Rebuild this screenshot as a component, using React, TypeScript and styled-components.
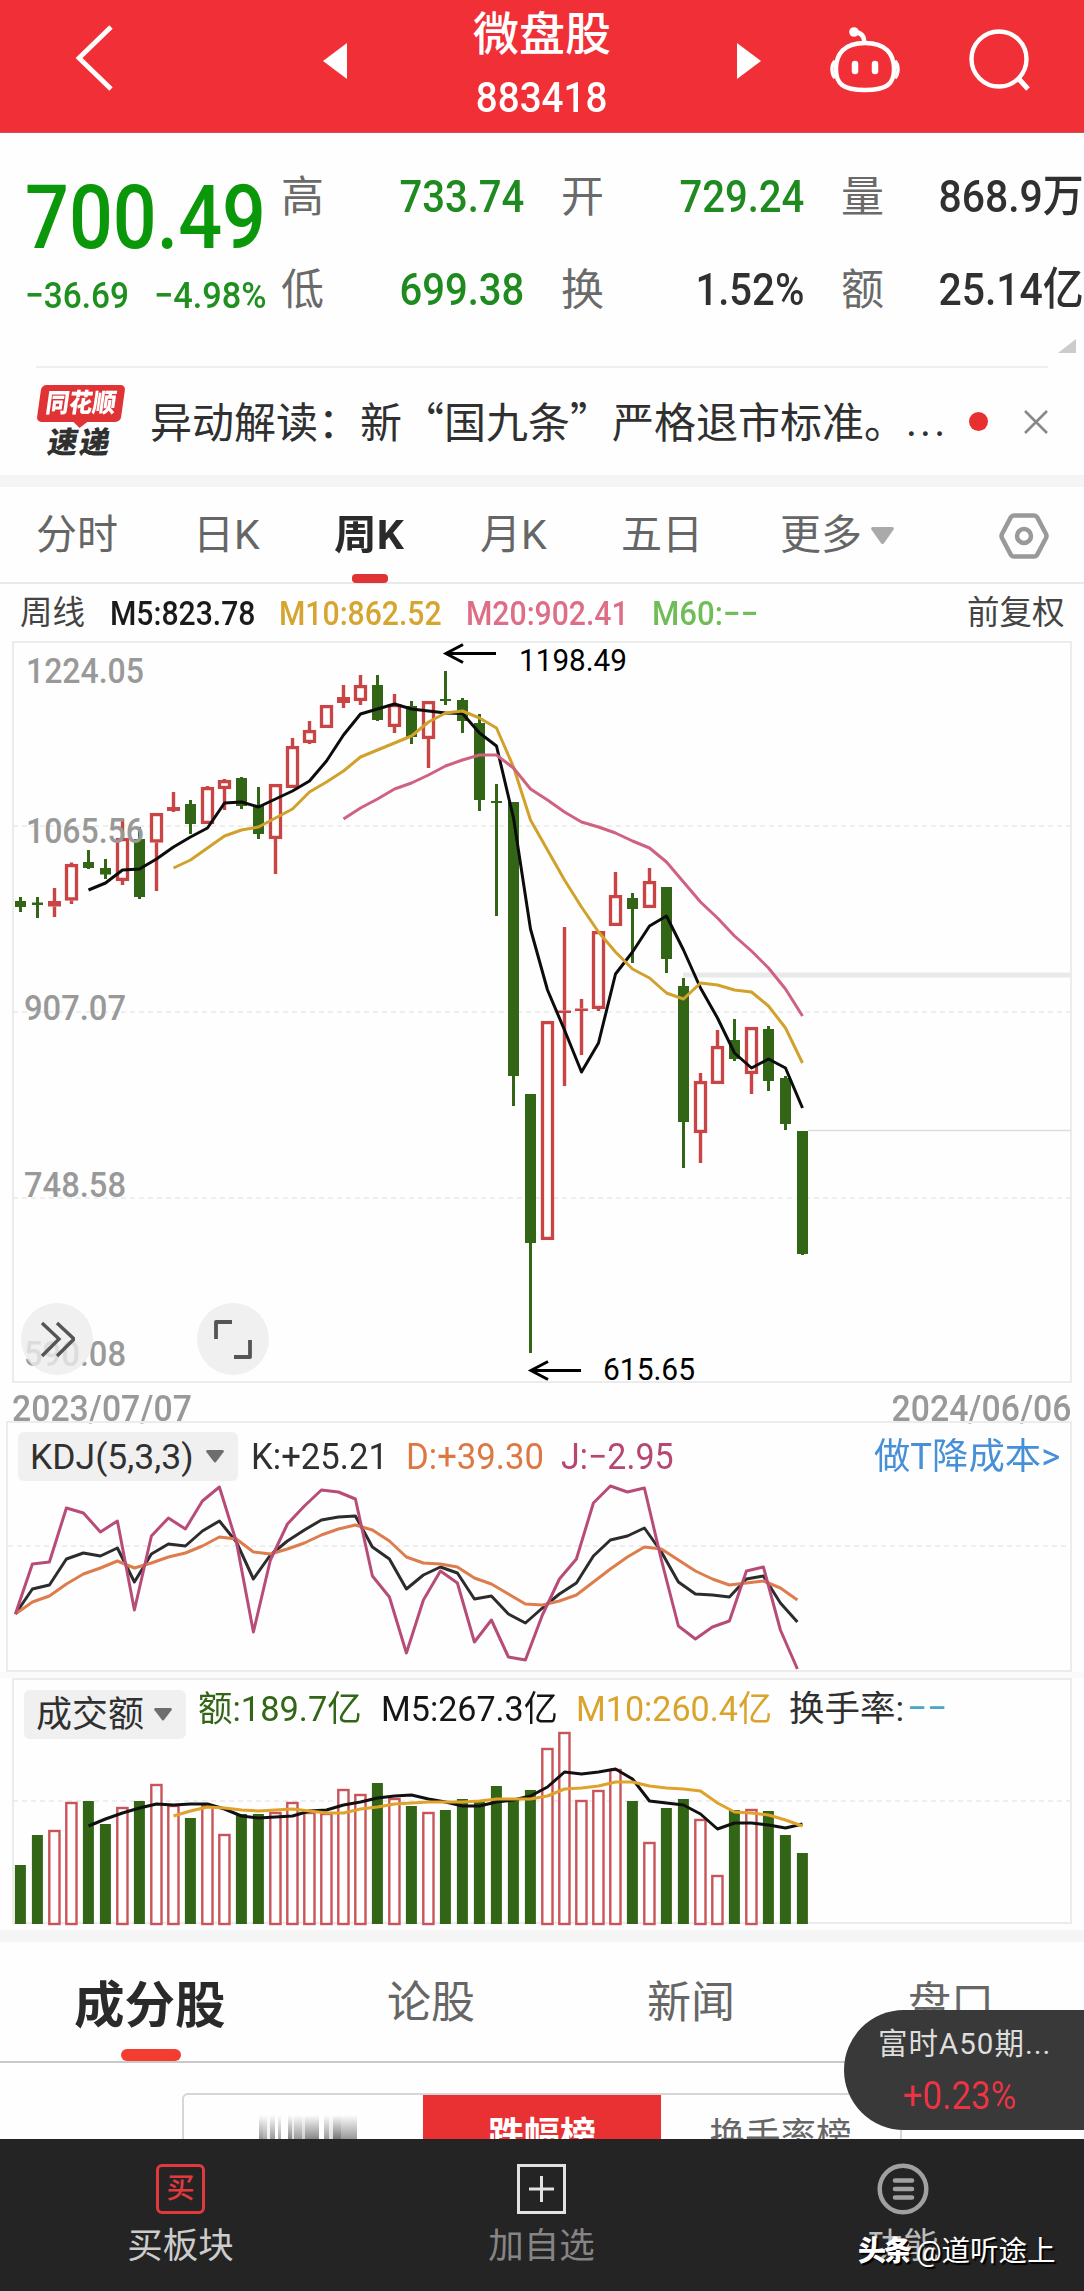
import React from "react";
import styled, { createGlobalStyle } from "styled-components";

const GREEN = "#326616";
const RED = "#c94444";
const GOLD = "#d0a22c";
const ROSE = "#cf6280";

const Global = createGlobalStyle`
  * { box-sizing: border-box; }
  body {
    margin: 0;
    background: #fefefe;
    font-family: Roboto, "Noto Sans CJK SC", sans-serif;
    color: #303030;
  }
  svg { display: block; flex: none; }
`;

const Page = styled.main`
  width: 1084px;
  height: 2291px;
  overflow: hidden;
  display: flex;
  flex-direction: column;
`;

const Text = styled.span<{
  $size: number;
  $color?: string;
  $weight?: number;
  $k?: number;
  $origin?: string;
  $ls?: number;
  $lh?: number;
}>`
  display: block;
  flex: none;
  white-space: nowrap;
  font-size: ${(p) => p.$size}px;
  line-height: ${(p) => p.$lh ?? Math.round(p.$size * 1.2)}px;
  color: ${(p) => p.$color ?? "inherit"};
  font-weight: ${(p) => p.$weight ?? 400};
  letter-spacing: ${(p) => p.$ls ?? 0}px;
  ${(p) => (p.$k ? `transform: scaleX(${p.$k}); transform-origin: ${p.$origin ?? "left"} center;` : "")}
`;

const Headline = styled(Text)`
  font-family: "Noto Sans CJK SC", sans-serif;
  margin-top: -4px;
`;

/* ---------- header ---------- */
const Header = styled.header`
  height: 133px;
  flex: none;
  display: flex;
  align-items: center;
  background: #f12f37;
  color: #fff;
  padding: 0 52px 0 74px;
  border-bottom: 1px solid #c8545a;
`;
const Back = styled.div`
  width: 249px;
  padding-bottom: 16px;
`;
const TitleBlock = styled.div`
  width: 390px;
  height: 133px;
  padding-top: 6px;
  display: flex;
  flex-direction: column;
  align-items: center;
  gap: 11px;
`;
const Arrow = styled.div`
  padding-bottom: 11px;
`;
const HeadIcon = styled.div<{ $left: number }>`
  margin-left: ${(p) => p.$left}px;
  padding-bottom: 13px;
`;

/* ---------- quote ---------- */
const Quote = styled.section`
  height: 233px;
  flex: none;
  display: grid;
  grid-template-columns: 281px 803px;
  grid-template-rows: 204px 29px;
`;
const Price = styled.div`
  padding: 32px 0 0 25px;
`;
const Change = styled.div`
  display: grid;
  grid-template-columns: 129px 128px;
  margin-top: 2px;
`;
const Stats = styled.div`
  padding-top: 17px;
  display: grid;
  grid-template-columns: repeat(3, 243px);
  grid-auto-rows: 93px;
  column-gap: 37px;
`;
const Stat = styled.div`
  display: flex;
  align-items: center;
  justify-content: space-between;
`;
const Corner = styled.div`
  grid-column: 2;
  display: flex;
  justify-content: flex-end;
  padding: 2px 8px 0 0;
`;

/* ---------- news ---------- */
const News = styled.section`
  margin: 0 36px;
  height: 109px;
  flex: none;
  border-top: 2px solid #efefef;
  display: flex;
  align-items: center;
`;
const Brand = styled.div`
  width: 114px;
  display: flex;
  flex-direction: column;
  padding-top: 1px;
`;
const BrandTop = styled.div`
  position: relative;
  width: 84px;
  height: 37px;
  margin-left: 3px;
  border-radius: 5px;
  background: #df3336;
  transform: skewX(-8deg);
  display: flex;
  align-items: center;
  justify-content: center;
  &::after {
    content: "";
    position: absolute;
    left: 36px;
    top: 36px;
    border: 8px solid transparent;
    border-top: 7px solid #df3336;
    border-bottom: 0;
  }
`;
const BrandBottom = styled.div`
  transform: skewX(-10deg);
  margin: 4px 0 0 12px;
`;
const Dot = styled.i`
  width: 19px;
  height: 19px;
  border-radius: 50%;
  background: #e93030;
  margin-left: auto;
`;
const Close = styled.div`
  margin-left: 36px;
`;

const Band = styled.div<{ $h: number; $c?: string }>`
  height: ${(p) => p.$h}px;
  flex: none;
  background: ${(p) => p.$c ?? "#f5f5f5"};
`;

/* ---------- period tabs ---------- */
const Periods = styled.nav`
  height: 97px;
  flex: none;
  display: grid;
  grid-template-columns: 157px 141px 146px 141px 159px 219px 50px;
  padding-left: 36px;
  border-bottom: 2px solid #e9e9e9;
`;
const Period = styled.div<{ $on?: boolean }>`
  display: flex;
  align-items: center;
  gap: 9px;
  color: ${(p) => (p.$on ? "#2a2a2a" : "#666")};
  position: relative;
  padding-top: 2px;
  &::after {
    content: "";
    display: ${(p) => (p.$on ? "block" : "none")};
    position: absolute;
    left: 18px;
    bottom: -1px;
    width: 36px;
    height: 9px;
    border-radius: 4px;
    background: #df3336;
  }
`;

const Averages = styled.div`
  height: 57px;
  flex: none;
  display: grid;
  grid-template-columns: 90px 169px 187px 186px 315px 100px;
  align-items: center;
  padding: 2px 0 0 20px;
`;

/* ---------- chart panels ---------- */
const Panel = styled.section<{ $h: number; $left: number }>`
  position: relative;
  flex: none;
  height: ${(p) => p.$h}px;
  width: ${(p) => 1072 - p.$left}px;
  margin-left: ${(p) => p.$left}px;
  outline: 2px solid #ececec;
  outline-offset: -2px;
`;
const Plot = styled.svg`
  position: absolute;
  inset: 0;
  overflow: visible;
  font-family: Roboto, sans-serif;
`;
const Round = styled.button<{ $x: number }>`
  position: absolute;
  left: ${(p) => p.$x}px;
  top: 662px;
  width: 72px;
  height: 72px;
  padding: 0;
  border: 0;
  border-radius: 50%;
  background: rgba(236, 236, 236, 0.8);
  display: grid;
  place-items: center;
`;
const Dates = styled.div`
  height: 38px;
  flex: none;
  display: flex;
  justify-content: space-between;
  padding: 0 13px 0 12px;
`;
const Legend = styled.div<{ $cols: string; $pad: string }>`
  position: relative;
  display: grid;
  grid-template-columns: ${(p) => p.$cols};
  align-items: start;
  padding: ${(p) => p.$pad};
`;
const Chip = styled.div<{ $w: number; $pad: number }>`
  width: ${(p) => p.$w}px;
  height: 49px;
  border-radius: 6px;
  background: #f0f0f0;
  display: flex;
  align-items: center;
  justify-content: space-between;
  padding: 0 14px 0 ${(p) => p.$pad}px;
`;
const Item = styled.div<{ $top: number }>`
  padding-top: ${(p) => p.$top}px;
`;

/* ---------- lower content ---------- */
const SubTabs = styled.nav`
  height: 121px;
  flex: none;
  display: grid;
  grid-template-columns: 313px 260px 261px 176px;
  padding-left: 74px;
  border-bottom: 2px solid #c9c9c9;
`;
const SubTab = styled.div<{ $on?: boolean }>`
  position: relative;
  padding-top: ${(p) => (p.$on ? 33 : 35)}px;
  color: ${(p) => (p.$on ? "#2a2a2a" : "#666")};
  &::after {
    content: "";
    display: ${(p) => (p.$on ? "block" : "none")};
    position: absolute;
    left: 47px;
    bottom: 0;
    width: 60px;
    height: 12px;
    border-radius: 6px;
    background: #f23d30;
  }
`;
const Ranking = styled.section`
  height: 76px;
  flex: none;
  overflow: hidden;
  padding: 30px 0 0 182px;
`;
const Segments = styled.div`
  width: 720px;
  height: 90px;
  border: 2px solid #d6d6d6;
  border-radius: 6px;
  display: grid;
  grid-template-columns: 239px 238px 239px;
`;
const Segment = styled.div<{ $on?: boolean }>`
  display: flex;
  justify-content: center;
  padding-top: 20px;
  background: ${(p) => (p.$on ? "#e93033" : "transparent")};
`;
const Smear = styled.div`
  display: flex;
  margin: 0 0 0 8px;
  height: 40px;
  -webkit-mask-image: linear-gradient(transparent, #000 24px);
  mask-image: linear-gradient(transparent, #000 24px);
`;
const Streak = styled.i<{ $w: number; $c: string }>`
  width: ${(p) => p.$w}px;
  background: ${(p) => p.$c};
`;
const FloatQuote = styled.aside`
  position: absolute;
  left: 844px;
  top: 2010px;
  width: 240px;
  height: 120px;
  border-radius: 60px 0 0 60px;
  background: #393939;
  padding: 16px 0 0 34px;
  display: flex;
  flex-direction: column;
  gap: 11px;
`;
const Plus = styled.div`
  padding-left: 25px;
`;
const BottomBar = styled.nav`
  height: 153px;
  flex: none;
  background: #242424;
  display: grid;
  grid-template-columns: 361px 361px 362px;
`;
const Action = styled.div`
  display: flex;
  flex-direction: column;
  align-items: center;
  padding-top: 25px;
  gap: 11px;
`;
const BuyBox = styled.div`
  width: 49px;
  height: 50px;
  border: 3px solid #e03a3e;
  border-radius: 6px;
  display: grid;
  place-items: center;
`;
const Watermark = styled.div`
  position: absolute;
  left: 858px;
  top: 2235px;
  display: flex;
  align-items: center;
  gap: 6px;
  color: #fff;
  text-shadow: 2px 2px 1px #000;
`;

/* ---------- data ---------- */
type Candle = [up: 0 | 1, high: number, top: number, bottom: number, low: number];

const candles: Candle[] = [
  [0, 897, 901, 907, 912], [0, 897, 902.5, 905, 918], [1, 888, 901, 906.5, 917], [1, 862.5, 864, 900.5, 904],
  [0, 850, 862, 868, 869], [0, 859, 868, 874.5, 879], [1, 819, 838, 881, 885], [0, 827, 839, 897, 899],
  [1, 813, 813, 842.5, 891], [1, 792, 807, 811, 812], [0, 800, 804, 824, 834], [1, 786, 787, 824, 824],
  [1, 779, 780, 789, 810], [0, 777, 778, 806, 809], [0, 787, 806, 834, 839], [1, 784, 784, 839, 874],
  [1, 738, 746, 788, 788], [1, 721, 730, 743, 744], [1, 705, 705, 728, 728], [1, 685, 697, 703, 708],
  [1, 675, 685, 701, 705], [0, 675, 685, 720, 721], [1, 694, 704, 727, 733], [0, 701, 706, 737, 744],
  [1, 701, 701, 739, 768], [0, 671, 699, 701, 705], [0, 698, 700, 721, 733], [0, 714, 723, 800, 811],
  [0, 784, 801, 803, 916], [0, 802, 802, 1076, 1106], [0, 1094, 1094, 1243, 1353], [1, 1021, 1021, 1240, 1240],
  [1, 927, 1010.5, 1013, 1086], [1, 999, 1008.5, 1011, 1055], [1, 931, 931, 1009, 1011], [1, 872, 895, 926, 926],
  [0, 893, 898, 909, 963], [1, 868, 881, 908, 908], [0, 887, 887, 959, 973], [0, 978, 986, 1122, 1168],
  [1, 1073, 1081, 1133, 1163], [1, 1030, 1046, 1084, 1084], [0, 1019, 1040, 1059, 1061], [1, 1027, 1027, 1074, 1094],
  [0, 1026, 1029, 1081, 1091], [0, 1076, 1078, 1124, 1130], [0, 1131, 1131, 1254, 1255],
];

const ma5 = [890, 883, 870, 869, 859, 847, 837, 828, 803, 802, 807, 799, 791, 781, 761, 735, 714, 709, 704, 709, 711, 713, 713.5, 733, 746, 818, 929, 990, 1030, 1072, 1043, 974, 952, 926, 916, 950, 988, 1018, 1053, 1068, 1059, 1068, 1108];
const ma10 = [868, 860, 848, 836, 830, 827, 818, 809, 792, 782, 771, 757, 750, 743, 736, 722, 713, 711, 718, 728, 767, 820, 850, 880, 907, 932, 952, 969, 978, 993, 999, 983, 985, 990, 992, 1006, 1028, 1063];
const ma20 = [819, 808, 799, 789, 783, 775, 766, 760, 755, 755, 768, 789, 800, 812, 822, 827, 833, 841, 848, 862, 882, 902, 918, 936, 951, 968, 989, 1016];

const lineJ = [1614, 1564, 1562, 1508, 1513, 1532, 1521, 1610, 1536, 1518, 1529, 1501, 1487, 1542, 1632, 1560, 1524, 1506, 1490, 1492, 1499, 1576, 1597, 1653, 1600, 1571, 1583, 1642, 1620, 1657, 1660, 1615, 1579, 1559, 1503, 1486, 1492, 1488, 1560, 1626, 1639, 1627, 1621, 1571, 1567, 1630, 1669];
const lineK = [1614, 1589, 1585, 1559, 1553, 1556, 1548, 1582, 1554, 1544, 1546, 1531, 1521, 1542, 1579, 1555, 1541, 1530, 1520, 1517, 1516, 1547, 1559, 1589, 1575, 1567, 1573, 1599, 1596, 1614, 1623, 1608, 1594, 1583, 1556, 1540, 1536, 1528, 1552, 1582, 1594, 1595, 1597, 1579, 1576, 1603, 1622];
const lineD = [1614, 1602, 1596, 1584, 1574, 1568, 1561, 1568, 1563, 1557, 1553, 1546, 1537, 1539, 1552, 1554, 1549, 1543, 1535, 1529, 1525, 1530, 1541, 1557, 1563, 1564, 1567, 1578, 1584, 1594, 1604, 1605, 1601, 1595, 1582, 1569, 1557, 1547, 1549, 1560, 1571, 1579, 1585, 1583, 1581, 1588, 1600];

const volume = [1865, 1835, 1830, 1802, 1801, 1824, 1807, 1801, 1784, 1805, 1818, 1805, 1834, 1814, 1814, 1812, 1802, 1812, 1813, 1789, 1794, 1783, 1798, 1806, 1812, 1810, 1799, 1802, 1786, 1800, 1790, 1748, 1732, 1800, 1790, 1769, 1801, 1842, 1808, 1799, 1819, 1875, 1810, 1809, 1811, 1835, 1853];
const volumeUp = new Set([2, 3, 6, 8, 9, 11, 12, 15, 16, 17, 18, 19, 20, 22, 24, 31, 32, 33, 34, 35, 37, 40, 41, 43]);
const vol5 = [1826, 1819, 1813, 1808, 1804, 1805, 1804, 1804, 1809, 1816, 1818, 1817, 1816, 1811, 1810, 1805, 1802, 1798, 1796, 1795, 1799, 1802, 1806, 1806, 1802, 1800, 1796, 1787, 1772, 1774, 1772, 1769, 1779, 1801, 1803, 1805, 1814, 1829, 1823, 1823, 1825, 1828, 1824];
const vol10 = [1816, 1811, 1807, 1808, 1810, 1811, 1810, 1809, 1811, 1813, 1813, 1809, 1807, 1804, 1803, 1802, 1802, 1802, 1801, 1799, 1799, 1799, 1796, 1789, 1788, 1786, 1782, 1782, 1786, 1788, 1789, 1791, 1803, 1812, 1813, 1815, 1820, 1826];

const STEP = 17;

function Line({ ys, from = 0, x0 = 20.5, color, w = 3 }: { ys: number[]; from?: number; x0?: number; color: string; w?: number }) {
  const points = ys.map((y, i) => `${x0 + (i + from) * STEP},${y}`).join(" ");
  return <polyline points={points} fill="none" stroke={color} strokeWidth={w} strokeLinejoin="round" />;
}

function CandleMark({ c, i }: { c: Candle; i: number }) {
  const x = 20.5 + i * STEP;
  const [up, high, top, bottom, low] = c;
  if (!up) {
    return (
      <g fill={GREEN}>
        <rect x={x - 1.5} y={high} width={3} height={low - high} />
        <rect x={x - 5.5} y={top} width={11} height={bottom - top} />
      </g>
    );
  }
  const hollow = bottom - top > 7;
  return (
    <g fill={RED}>
      <rect x={x - 1.7} y={high} width={3.4} height={top - high} />
      <rect x={x - 1.7} y={bottom} width={3.4} height={low - bottom} />
      {hollow ? (
        <rect x={x - 5} y={top + 1.6} width={10} height={bottom - top - 3.2} fill="#fff" stroke={RED} strokeWidth={3.3} />
      ) : (
        <rect x={x - 6.5} y={top} width={13} height={bottom - top} />
      )}
    </g>
  );
}

function Dashes({ y, x1 = 13 }: { y: number; x1?: number }) {
  return <line x1={x1} x2={1070} y1={y} y2={y} stroke="#e9e9e9" strokeWidth={1.6} strokeDasharray="5 4" />;
}

function Axis({ x, y, w, children }: { x: number; y: number; w: number; children: string }) {
  return (
    <text x={x} y={y} fontSize={35} fontWeight={500} fill="#999" textLength={w} lengthAdjust="spacingAndGlyphs">
      {children}
    </text>
  );
}

function Caret({ w = 18, h = 13, color = "#6e6e6e" }) {
  return (
    <svg width={w} height={h} viewBox="0 0 18 13" preserveAspectRatio="none">
      <path d="M0 1.5Q0 0 1.500 0H16.500Q18 0 18 1.500L10 12Q9 13 8 12Z" fill={color} />
    </svg>
  );
}

function PricePanel() {
  return (
    <Panel $h={742} $left={12}>
      <Plot width={1060} height={742} viewBox="12 641 1060 742">
        <Dashes y={826} />
        <Dashes y={1012} />
        <Dashes y={1198} />
        <line x1={683} x2={1071} y1={975} y2={975} stroke="#e9e9e9" strokeWidth={5} />
        <line x1={808} x2={1071} y1={1130.500} y2={1130.500} stroke="#dedede" strokeWidth={1.500} />
        {candles.map((c, i) => <CandleMark key={i} c={c} i={i} />)}
        <Line ys={ma5} from={4} color="#0c0c0c" />
        <Line ys={ma10} from={9} color={GOLD} />
        <Line ys={ma20} from={19} color={ROSE} />
        <Axis x={26} y={683} w={118}>1224.05</Axis>
        <Axis x={26} y={842.5} w={118}>1065.56</Axis>
        <Axis x={24} y={1019.5} w={102}>907.07</Axis>
        <Axis x={24} y={1197} w={102}>748.58</Axis>
        <Axis x={24} y={1366} w={102}>590.08</Axis>
        <g fill="none" stroke="#000" strokeWidth={3}>
          <path d="M496 653.500H446M463 644.500L446 653.500L463 662.500" />
          <path d="M581 1370.500H531M548 1361.500L531 1370.500L548 1379.500" />
        </g>
        <text x={519} y={671} fontSize={31} fill="#000" textLength={108} lengthAdjust="spacingAndGlyphs">1198.49</text>
        <text x={603} y={1380} fontSize={31} fill="#000" textLength={92} lengthAdjust="spacingAndGlyphs">615.65</text>
      </Plot>
      <Round $x={9} aria-label="展开">
        <svg width="36" height="38" viewBox="0 0 36 38" fill="none" stroke="#555" strokeWidth="3.400">
          <path d="M3 3L20 19L3 36M18 3L35 19L18 36" />
        </svg>
      </Round>
      <Round $x={185} aria-label="全屏">
        <svg width="40" height="40" viewBox="0 0 40 40" fill="none" stroke="#555" strokeWidth="3.800" strokeLinejoin="round">
          <path d="M3 20V3H19M37 21V38H21" />
        </svg>
      </Round>
    </Panel>
  );
}

function KdjPanel() {
  return (
    <Panel $h={251} $left={6}>
      <Plot width={1066} height={251} viewBox="6 1421 1066 251">
        <Dashes y={1546} x1={8} />
        <Line ys={lineK} x0={15.4} color="#2c2c2c" />
        <Line ys={lineD} x0={15.4} color="#dd7d4d" />
        <Line ys={lineJ} x0={15.4} color="#b84c78" />
      </Plot>
      <Legend $cols="233px 155px 155px 313px 190px" $pad="11px 0 0 12px">
        <Chip $w={220} $pad={12}>
          <Text $size={35.5} $lh={44}>KDJ(5,3,3)</Text>
          <Caret />
        </Chip>
        <Item $top={3}><Text $size={36.5} $k={0.95}>K:+25.21</Text></Item>
        <Item $top={3}><Text $size={36.5} $k={0.95} $color="#dd7844">D:+39.30</Text></Item>
        <Item $top={3}><Text $size={36.5} $k={0.93} $color="#b84673">J:−2.95</Text></Item>
        <Item $top={4}><Text $size={36} $k={1.01} $color="#4790d8">做T降成本&gt;</Text></Item>
      </Legend>
    </Panel>
  );
}

function VolumePanel() {
  return (
    <Panel $h={246} $left={12}>
      <Plot width={1060} height={246} viewBox="12 1678 1060 246">
        <Dashes y={1801} />
        {volume.map((y, i) => {
          const x = 20.4 + i * STEP;
          return volumeUp.has(i) ? (
            <rect key={i} x={x - 5.1} y={y + 1} width={10.2} height={1923 - y} fill="#fff" stroke="#c9555a" strokeWidth={2.4} />
          ) : (
            <rect key={i} x={x - 5.5} y={y} width={11} height={1924 - y} fill={GREEN} />
          );
        })}
        <Line ys={vol5} from={4} color="#111" />
        <Line ys={vol10} from={9} color="#dfa22b" />
      </Plot>
      <Legend $cols="174px 183px 195px 213px 118px 60px" $pad="12px 0 0 12px">
        <Chip $w={162} $pad={12}>
          <Text $size={36} $lh={46}>成交额</Text>
          <Caret />
        </Chip>
        <Item $top={0}><Text $size={35.5} $k={0.97} $color={GREEN} $lh={38}>额:189.7亿</Text></Item>
        <Item $top={0}><Text $size={35.5} $k={0.96} $color="#151515" $lh={38}>M5:267.3亿</Text></Item>
        <Item $top={0}><Text $size={35.5} $k={0.96} $color="#d9a32c" $lh={38}>M10:260.4亿</Text></Item>
        <Item $top={0}><Text $size={35.5} $lh={38}>换手率:</Text></Item>
        <Item $top={0}><Text $size={35} $lh={38} $color="#4aa8c6">−−</Text></Item>
      </Legend>
    </Panel>
  );
}

const stats: [string, string, string][] = [
  ["高", "733.74", "#1f8a1f"],
  ["开", "729.24", "#1f8a1f"],
  ["量", "868.9万", "#303030"],
  ["低", "699.38", "#1f8a1f"],
  ["换", "1.52%", "#303030"],
  ["额", "25.14亿", "#303030"],
];

const smear: [number, string][] = [
  [4, "#999"], [4, "#aaa"], [3, "#eee"], [5, "#999"], [3, "#fff"], [3, "#aaa"], [7, "#fff"], [4, "#888"], [2, "#ddd"], [8, "#999"], [3, "#ccc"], [14, "#888"], [5, "#fff"], [5, "#999"], [4, "#ddd"], [8, "#777"], [16, "#999"],
];

export default function App() {
  return (
    <Page>
      <Global />
      <Header>
        <Back>
          <svg width="40" height="66" viewBox="0 0 40 66" fill="none" stroke="#fff" strokeWidth="4.800">
            <path d="M37 2L5 33L37 64" />
          </svg>
        </Back>
        <Arrow>
          <svg width="24" height="36" viewBox="0 0 24 36"><path d="M24 0V36L0 18Z" fill="#fff" /></svg>
        </Arrow>
        <TitleBlock>
          <Text $size={46} $lh={56} $weight={500}>微盘股</Text>
          <Text $size={42} $lh={50} $k={0.92} $origin="center" $weight={500}>883418</Text>
        </TitleBlock>
        <Arrow>
          <svg width="24" height="36" viewBox="0 0 24 36"><path d="M0 0V36L24 18Z" fill="#fff" /></svg>
        </Arrow>
        <HeadIcon $left={68}>
          <svg width="72" height="66" viewBox="0 0 72 66" fill="none" stroke="#fff" strokeWidth="4.400">
            <path d="M36 16C15 16 7 27 7 42C7 57 14 63 36 63C58 63 65 57 65 42C65 27 57 16 36 16Z" />
            <path d="M6 34Q3 37 3 42Q3 48 6 51M66 34Q69 37 69 42Q69 48 66 51" strokeWidth="3.500" />
            <path d="M35 16Q36 7 27 5" />
            <circle cx="25" cy="5" r="4.800" fill="#fff" stroke="none" />
            <path d="M26 37V44M46 37V44" strokeWidth="6.500" strokeLinecap="round" />
          </svg>
        </HeadIcon>
        <HeadIcon $left={68}>
          <svg width="62" height="62" viewBox="0 0 62 62" fill="none" stroke="#fff" strokeWidth="4.400">
            <circle cx="30" cy="30" r="27.500" />
            <path d="M49 49L59 60" strokeWidth="5" />
          </svg>
        </HeadIcon>
      </Header>

      <Quote>
        <Price>
          <Text $size={89} $lh={106} $weight={500} $k={0.868} $color="#0a970a">700.49</Text>
          <Change>
            <Text $size={37.5} $k={0.89} $weight={500} $color="#1f8f1f">−36.69</Text>
            <Text $size={37.5} $k={0.915} $weight={500} $color="#1f8f1f">−4.98%</Text>
          </Change>
        </Price>
        <Stats>
          {stats.map(([label, value, color]) => (
            <Stat key={label}>
              <Text $size={43} $color="#6a6a6a">{label}</Text>
              <Text $size={45} $k={/[万亿]/.test(value) ? 0.91 : 0.89} $origin="right" $weight={500} $color={color}>{value}</Text>
            </Stat>
          ))}
        </Stats>
        <Corner>
          <svg width="18" height="14" viewBox="0 0 18 14"><path d="M18 0V14H0Z" fill="#ccc" /></svg>
        </Corner>
      </Quote>

      <News>
        <Brand>
          <BrandTop><Text $size={26} $weight={900} $color="#fff" $k={0.9} $origin="center">同花顺</Text></BrandTop>
          <BrandBottom><Text $size={30} $lh={33} $weight={900} $ls={2}>速递</Text></BrandBottom>
        </Brand>
        <Headline $size={42}>异动解读：新“国九条”严格退市标准。</Headline>
        <Text $size={42} $ls={3}>...</Text>
        <Dot />
        <Close>
          <svg width="24" height="24" viewBox="0 0 24 24" stroke="#888" strokeWidth="2.600"><path d="M1 1L23 23M23 1L1 23" /></svg>
        </Close>
      </News>
      <Band $h={12} />

      <Periods>
        <Period><Text $size={41}>分时</Text></Period>
        <Period><Text $size={41}>日K</Text></Period>
        <Period $on><Text $size={41} $weight={700} $k={1.04}>周K</Text></Period>
        <Period><Text $size={41}>月K</Text></Period>
        <Period><Text $size={41}>五日</Text></Period>
        <Period><Text $size={41}>更多</Text><Caret w={23} h={18} color="#aaa" /></Period>
        <Period>
          <svg width="50" height="46" viewBox="0 0 50 46" fill="none" stroke="#999" strokeWidth="4.500">
            <path d="M15 2.500H35Q37 2.500 38 4L47 21Q48 23 47 25L38 42Q37 43.500 35 43.500H15Q13 43.500 12 42L3 25Q2 23 3 21L12 4Q13 2.500 15 2.500Z" />
            <circle cx="25" cy="23" r="7" />
          </svg>
        </Period>
      </Periods>

      <Averages>
        <Text $size={32.5} $color="#444">周线</Text>
        <Text $size={33.5} $k={0.9} $weight={500} $color="#1a1a1a">M5:823.78</Text>
        <Text $size={33.5} $k={0.9} $weight={500} $color="#d5a52f">M10:862.52</Text>
        <Text $size={33.5} $k={0.9} $weight={500} $color="#de6d86">M20:902.41</Text>
        <Text $size={33.5} $k={0.93} $weight={500} $color="#70bd58">M60:−−</Text>
        <Text $size={32.5} $color="#444">前复权</Text>
      </Averages>

      <PricePanel />
      <Dates>
        <Text $size={36.5} $lh={52} $k={0.925} $color="#999" $weight={500}>2023/07/07</Text>
        <Text $size={36.5} $lh={52} $k={0.925} $color="#999" $origin="right" $weight={500}>2024/06/06</Text>
      </Dates>
      <KdjPanel />
      <Band $h={6} $c="#fafafa" />
      <VolumePanel />
      <Band $h={6} $c="#fefefe" />
      <Band $h={12} />

      <SubTabs>
        <SubTab $on><Text $size={50.5} $weight={700}>成分股</Text></SubTab>
        <SubTab><Text $size={44}>论股</Text></SubTab>
        <SubTab><Text $size={44}>新闻</Text></SubTab>
        <SubTab><Text $size={43}>盘口</Text></SubTab>
      </SubTabs>
      <Ranking>
        <Segments>
          <Segment>
            <Smear>{smear.map(([w, c], i) => <Streak key={i} $w={w} $c={c} />)}</Smear>
          </Segment>
          <Segment $on><Text $size={36} $weight={700} $color="#fff">跌幅榜</Text></Segment>
          <Segment><Text $size={35.5} $color="#666">换手率榜</Text></Segment>
        </Segments>
      </Ranking>

      <BottomBar>
        <Action>
          <BuyBox><Text $size={28} $weight={500} $color="#e03a3e">买</Text></BuyBox>
          <Text $size={35.500} $color="#ccc">买板块</Text>
        </Action>
        <Action>
          <svg width="49" height="50" viewBox="0 0 49 50" fill="none" stroke="#e2e2e2" strokeWidth="3">
            <path d="M1.500 1.500H47.500V48.500H1.500ZM24.500 12V38M12 25H37" />
          </svg>
          <Text $size={35.500} $color="#858585">加自选</Text>
        </Action>
        <Action>
          <svg width="52" height="50" viewBox="0 0 52 50" fill="none" stroke="#a0a0a0" strokeWidth="4.500" overflow="visible">
            <circle cx="26" cy="25" r="23.300" />
            <path d="M18 16.500H35M18 25H35M18 33.500H35" strokeWidth="4.600" strokeLinecap="round" />
          </svg>
          <Text $size={35.500} $color="#bbb">功能</Text>
        </Action>
      </BottomBar>

      <FloatQuote>
        <Text $size={29.5} $lh={36} $ls={1} $color="#ddd">富时A50期...</Text>
        <Plus><Text $size={38} $k={0.92} $color="#ee3344">+0.23%</Text></Plus>
      </FloatQuote>
      <Watermark>
        <Text $size={28} $ls={-2} $weight={900}>头条</Text>
        <Text $size={28.5}>@道听途上</Text>
      </Watermark>
    </Page>
  );
}
